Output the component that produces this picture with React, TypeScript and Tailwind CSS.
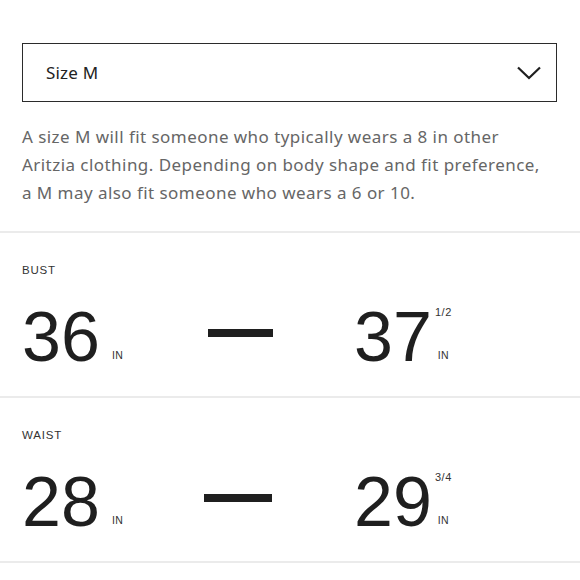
import React from 'react';

type Measure = {
  label: string;
  from: string;
  to: string;
  fraction?: string;
  first: string;
  dash: string;
  last: string;
};

const measures: Measure[] = [
  { label: 'BUST', from: '36', to: '37', fraction: '1/2', first: 'w-[186px]', dash: 'w-[65px]', last: 'w-[179px]' },
  { label: 'WAIST', from: '28', to: '29', fraction: '3/4', first: 'w-[182px]', dash: 'w-[68px]', last: 'w-[180px]' },
];

function Value({ value, fraction }: { value: string; fraction?: string }) {
  return (
    <div className="flex items-start">
      <span className="text-[70px] leading-[70px] text-[#1f1f1f]">{value}</span>
      {fraction ? (
        <div className="ml-[3px] flex h-[70px] flex-col items-center justify-between pt-[3px] pb-[10px] text-[11px] leading-[14px] tracking-[0.6px] text-[#333]">
          <span>{fraction}</span>
          <span className="text-[10.5px] tracking-[0.5px]">IN</span>
        </div>
      ) : (
        <div className="ml-[12px] flex h-[70px] flex-col justify-end pb-[10px] text-[10.5px] leading-[14px] tracking-[0.5px] text-[#333]">
          <span>IN</span>
        </div>
      )}
    </div>
  );
}

export default function App() {
  return (
    <div className="w-[580px] h-[580px] overflow-hidden bg-white" style={{ fontFamily: '"Liberation Sans", Arial, sans-serif' }}>
      {/* Size select */}
      <div className="px-[22px] pt-[43px]">
        <div className="flex h-[59px] w-[535px] items-center justify-between border-[1.5px] border-[#2b2b2b] pl-[23px] pr-[15px]">
          <span className="text-[17px] text-[#222] tracking-[0.2px]" style={{ fontFamily: '"Noto Sans", sans-serif' }}>Size M</span>
          <svg width="24" height="14" viewBox="0 0 24 14" fill="none">
            <path d="M1 1.5 L12 12 L23 1.5" stroke="#1f1f1f" strokeWidth="2.2" />
          </svg>
        </div>
        <p
          className="mt-[21px] w-[526px] text-[17px] leading-[28px] tracking-[0.45px] text-[#666]"
          style={{ fontFamily: '"Noto Sans", sans-serif' }}
        >
          A size M will fit someone who typically wears a 8 in other Aritzia clothing. Depending on body shape and fit preference, a M may also fit someone who wears a 6 or 10.
        </p>
      </div>

      {/* Measurements */}
      <div className="mt-[24px]">
        {measures.map((m) => (
          <div key={m.label} className="border-t-2 border-[#ebebeb] px-[22px] pt-[30px] pb-[24px]">
            <div className="text-[11.5px] leading-[14px] tracking-[0.8px] text-[#333]">{m.label}</div>
            <div className="mt-[25px] flex items-start">
              <div className={m.first}>
                <Value value={m.from} />
              </div>
              <div className={`mt-[27px] h-[8px] bg-[#1f1f1f] ${m.dash}`} />
              <div className={`flex justify-end ${m.last}`}>
                <Value value={m.to} fraction={m.fraction} />
              </div>
            </div>
          </div>
        ))}
        <div className="border-t-2 border-[#ebebeb]" />
      </div>
    </div>
  );
}
